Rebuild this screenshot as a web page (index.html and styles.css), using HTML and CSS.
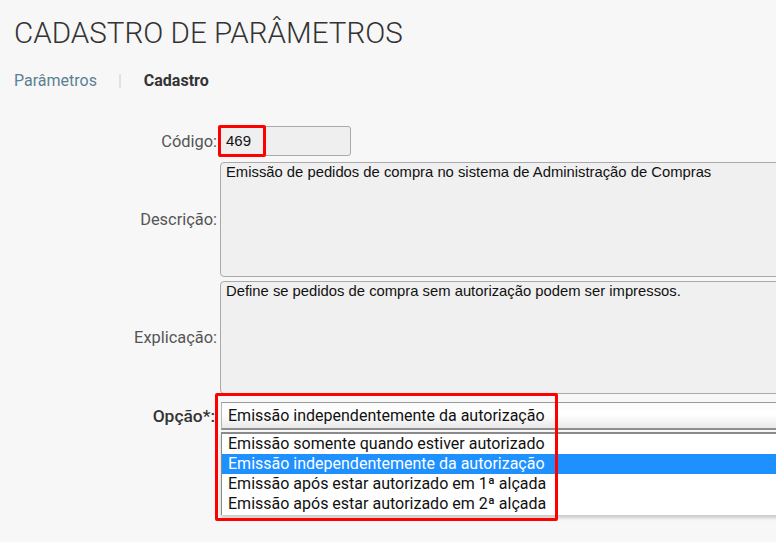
FILE: index.html
```html
<!DOCTYPE html>
<html lang="pt-BR">
<head>
<meta charset="utf-8">
<title>Cadastro de Parâmetros</title>
<link rel="stylesheet" href="styles.css">
</head>
<body>
<div class="page">
  <h1 class="title">CADASTRO DE PARÂMETROS</h1>
  <nav class="crumbs">
    <span class="crumb-link">Parâmetros</span>
    <span class="crumb-sep">|</span>
    <span class="crumb-current">Cadastro</span>
  </nav>

  <div class="form">
    <div class="row row-code">
      <label class="label">Código:</label>
      <div class="field">
        <div class="input-code">469</div>
        <div class="mark mark-code"></div>
      </div>
    </div>

    <div class="row row-desc">
      <label class="label">Descrição:</label>
      <div class="field">
        <div class="textarea ta-desc">Emissão de pedidos de compra no sistema de Administração de Compras</div>
      </div>
    </div>

    <div class="row row-expl">
      <label class="label">Explicação:</label>
      <div class="field">
        <div class="textarea ta-expl">Define se pedidos de compra sem autorização podem ser impressos.</div>
      </div>
    </div>

    <div class="row row-opt">
      <label class="label label-opt">Opção*:</label>
      <div class="field field-opt">
        <div class="select">Emissão independentemente da autorização</div>
        <ul class="dropdown">
          <li class="opt">Emissão somente quando estiver autorizado</li>
          <li class="opt opt-selected">Emissão independentemente da autorização</li>
          <li class="opt">Emissão após estar autorizado em 1ª alçada</li>
          <li class="opt">Emissão após estar autorizado em 2ª alçada</li>
        </ul>
        <div class="mark mark-opt"></div>
      </div>
    </div>
  </div>
</div>
</body>
</html>
```

FILE: styles.css
```css
html, body {
  margin: 0;
  padding: 0;
  background: #f7f7f7;
  overflow: hidden;
}

.page {
  width: 776px;
  height: 542px;
  overflow: hidden;
  font-family: Roboto, "Liberation Sans", Arial, sans-serif;
  color: #333;
}

.title {
  margin: 0;
  padding: 15px 0 0 14px;
  font-size: 29.6px;
  line-height: 36px;
  font-weight: 300;
  color: #333;
  letter-spacing: 0;
}

.crumbs {
  display: flex;
  align-items: center;
  margin: 20px 0 0 14px;
  font-size: 16px;
  line-height: 20px;
}

.crumb-link {
  color: #5b7f93;
}

.crumb-sep {
  color: #d6d6d6;
  margin: 0 22px 0 21px;
}

.crumb-current {
  font-weight: 700;
  color: #333;
}

.form {
  margin-top: 35px;
  display: flex;
  flex-direction: column;
}

.row {
  display: grid;
  grid-template-columns: 217px 600px;
  column-gap: 3px;
  align-items: center;
}

.row-desc { margin-top: 6px; }
.row-expl { margin-top: 4px; }
.row-opt { margin-top: 8px; align-items: start; }

.label {
  text-align: right;
  font-size: 16.4px;
  color: #555;
  white-space: nowrap;
}

.label-opt {
  font-size: 17.4px;
  font-weight: 500;
  color: #333;
  line-height: 28px;
  margin-right: 2px;
}

.field {
  position: relative;
}

.input-code {
  box-sizing: border-box;
  width: 131px;
  height: 30px;
  padding: 0 5px;
  background: #efefef;
  border: 1px solid #aaa;
  border-radius: 3px;
  font-family: Arial, "Liberation Sans", sans-serif;
  font-size: 15px;
  line-height: 28px;
  color: #111;
}

.textarea {
  box-sizing: border-box;
  width: 600px;
  padding: 1px 5px;
  background: #f0f0f0;
  border: 1px solid #a9a9a9;
  border-radius: 4px;
  font-family: Arial, "Liberation Sans", sans-serif;
  font-size: 14.8px;
  line-height: 16px;
  color: #111;
}

.ta-desc { height: 115px; }
.ta-expl { height: 113px; }

.select {
  box-sizing: border-box;
  width: 600px;
  height: 28px;
  padding: 0 6px;
  margin-left: 1px;
  background: linear-gradient(#fbfbfb 0%, #ffffff 45%, #e9e9e9 100%);
  border-top: 1px solid #9a9a9a;
  border-bottom: 2px solid #8f8f8f;
  border-left: 1px solid #b5b5b5;
  font-size: 16px;
  line-height: 26px;
  color: #111;
  white-space: nowrap;
}

.dropdown {
  list-style: none;
  margin: 2px 0 0 1px;
  padding: 0;
  width: 600px;
  box-sizing: border-box;
  height: 83px;
  background: #fff;
  border-top: 2px solid #8a8a8a;
  border-left: 1px solid #8a8a8a;
  box-shadow: 0 3px 3px rgba(0, 0, 0, 0.18);
}

.opt {
  height: 20px;
  padding: 0 6px;
  font-size: 16px;
  line-height: 20px;
  color: #111;
  white-space: nowrap;
}

.opt-selected {
  background: #1e90ff;
  color: #fff;
}

.mark {
  position: absolute;
  border: 3px solid #ff0000;
  border-radius: 2px;
  pointer-events: none;
}

.mark-code {
  left: -2px;
  top: -1px;
  width: 42px;
  height: 26px;
}

.mark-opt {
  left: -5px;
  top: -9px;
  width: 337px;
  height: 122px;
}
```
